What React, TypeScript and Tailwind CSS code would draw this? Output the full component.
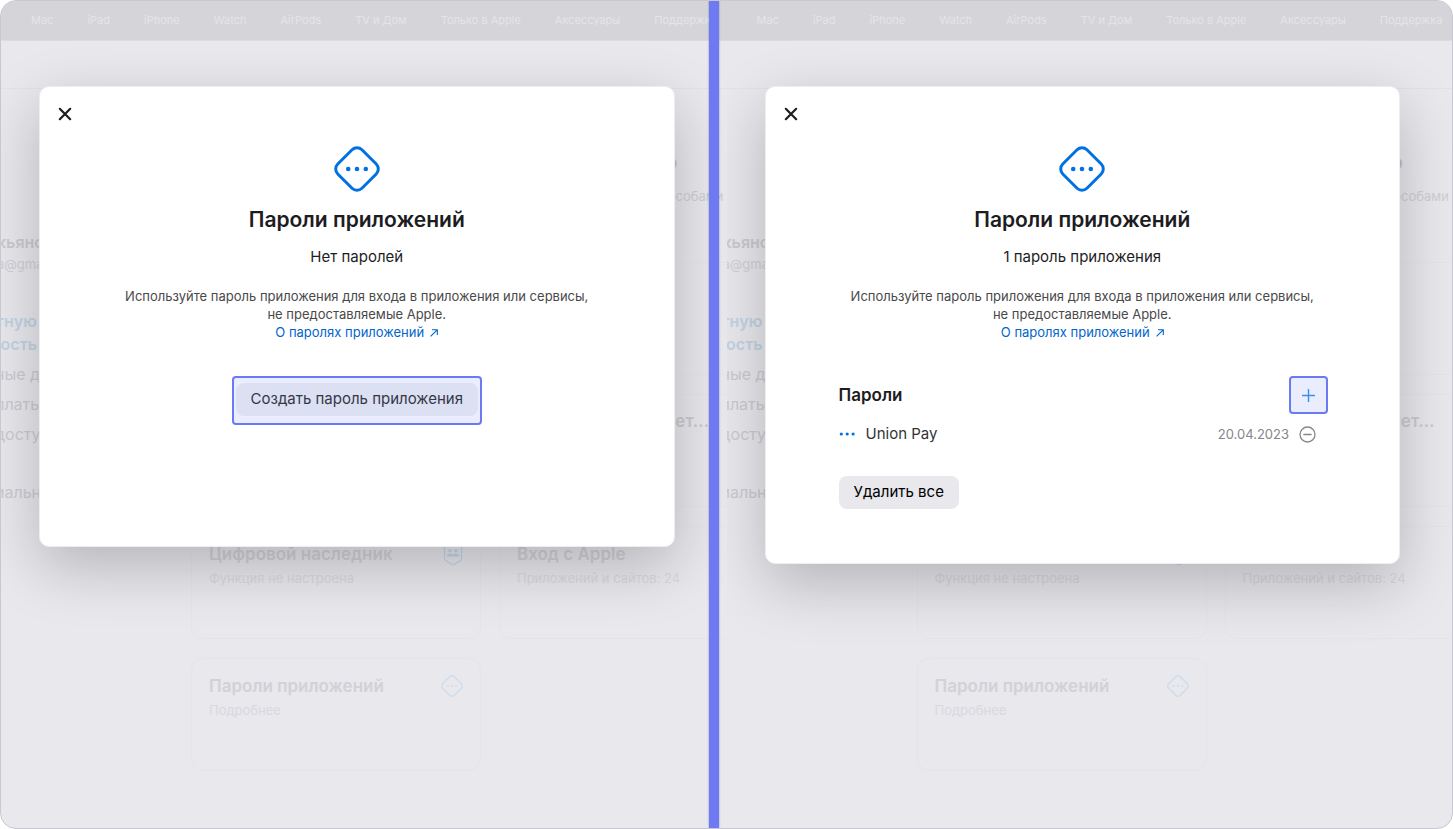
import React from 'react';

const navItems = ['Mac', 'iPad', 'iPhone', 'Watch', 'AirPods', 'TV и Дом', 'Только в Apple', 'Аксессуары', 'Поддержка'];

const DiamondIcon = ({ className }: { className: string }) => (
  <svg viewBox="0 0 46 46" fill="none" className={className} aria-hidden="true">
    <rect x="5.9" y="5.9" width="34.2" height="34.2" rx="7" transform="rotate(45 23 23)" stroke="currentColor" strokeWidth="3" />
    <circle cx="14.2" cy="23" r="2.3" fill="currentColor" />
    <circle cx="23" cy="23" r="2.3" fill="currentColor" />
    <circle cx="31.8" cy="23" r="2.3" fill="currentColor" />
  </svg>
);

const LegacyIcon = () => (
  <svg viewBox="0 0 20 26" fill="none" className="h-[26px] w-5 text-[#c3d6ea]" aria-hidden="true">
    <path d="M3.5 1.5h13a2 2 0 0 1 2 2v14.2a2 2 0 0 1-1 1.7L11 23.6a2 2 0 0 1-2 0l-6.5-4.2a2 2 0 0 1-1-1.7V3.5a2 2 0 0 1 2-2Z" stroke="currentColor" strokeWidth="1.2" />
    <circle cx="7" cy="9.8" r="1.8" fill="currentColor" />
    <circle cx="13" cy="9.8" r="1.8" fill="currentColor" />
    <path d="M3.8 15.500c0-2 1.400-3 3.200-3s2.600.8 3 1.600c.4-.8 1.200-1.600 3-1.600s3.200 1 3.200 3Z" fill="currentColor" />
  </svg>
);

const BackCard = ({ title, text, icon }: { title?: string; text?: string; icon?: React.ReactNode }) => (
  <div className="h-[113px] rounded-xl border border-[#e5e5e9] px-[17px] pt-[15px]">
    <div className="flex h-6 items-center justify-between">
      <h3 className="text-[17px] font-semibold leading-6 text-[#d2d2d6]">{title}</h3>
      {icon}
    </div>
    <p className="text-[13px] leading-6 text-[#d9d9dd]">{text}</p>
  </div>
);

const AccountPage = () => (
  <div className="col-start-1 row-start-1 min-w-0 overflow-hidden">
    <nav className="flex h-10 items-center gap-[34px] border-b border-[#dcdce0] bg-[#d5d5d9] pb-px pl-[30px]">
      {navItems.map((item) => (
        <a key={item} href="#" className="shrink-0 whitespace-nowrap text-[11px] leading-4 text-[#e4e4e8]">
          {item}
        </a>
      ))}
    </nav>
    <div className="h-12 border-b border-[#e2e2e6]" />
    <div className="flex">
      <aside className="w-[190px] shrink-0 overflow-hidden pt-[141px] text-[#cbcbcf]">
        <div className="-ml-1">
          <p className="text-base font-semibold leading-6">кьяно</p>
          <p className="text-[13px] leading-5 text-[#d0d0d4]">a@gma</p>
        </div>
        <a href="#" className="mt-9 flex w-9 flex-col items-end text-base font-semibold leading-[23px] text-[#c3d3e3]">
          <span>тную</span>
          <span>ность</span>
        </a>
        <ul className="-ml-1.5 mt-[3px] text-base leading-[30px]">
          <li>ные д</li>
          <li>платы</li>
          <li>досту</li>
          <li className="mt-7">иальн</li>
        </ul>
      </aside>
      <div className="min-w-0 grow">
        <div className="flex h-[173px] flex-col items-end pt-[57px]">
          <h1 className="pr-[49px] text-xl font-semibold leading-8 text-[#c3c3c7]">о</h1>
          <p className="pr-[3px] text-[13px] leading-9 text-[#cfcfd3]">особами</p>
        </div>
        <div className="grid grid-cols-[290px_290px] gap-x-[18px] gap-y-[19px]">
          <BackCard />
          <BackCard />
          <BackCard />
          <div className="h-[113px] rounded-xl border border-[#e5e5e9] pr-[79px] pt-[14px] text-right">
            <h3 className="text-[17px] font-semibold leading-6 text-[#cbcbcf]">нет…</h3>
          </div>
          <BackCard title="Цифровой наследник" text="Функция не настроена" icon={<LegacyIcon />} />
          <BackCard title="Вход с Apple" text="Приложений и сайтов: 24" />
          <BackCard
            title="Пароли приложений"
            text="Подробнее"
            icon={<DiamondIcon className="h-[22px] w-[22px] text-[#cfdded]" />}
          />
        </div>
      </div>
    </div>
  </div>
);

const Dialog = ({ status, children }: { status: string; children: React.ReactNode }) => (
  <section
    role="dialog"
    aria-label="Пароли приложений"
    className="z-10 col-start-1 row-start-1 mb-auto ml-[38px] mr-[52px] mt-[85px] rounded-[10px] border border-[#ededf0] bg-white shadow-[0_20px_60px_rgba(0,0,0,0.22)]"
  >
    <button type="button" aria-label="Закрыть" className="ml-[18px] mt-[20px] block text-[#1d1d1f]">
      <svg viewBox="0 0 14 14" className="h-[14px] w-[14px]" aria-hidden="true">
        <path d="M1.8 1.8 12.2 12.2M12.2 1.8 1.8 12.2" stroke="currentColor" strokeWidth="2.2" strokeLinecap="round" />
      </svg>
    </button>
    <div className="mt-[25px] flex flex-col items-center text-center">
      <DiamondIcon className="h-[46px] w-[46px] text-[#0071e3]" />
      <h2 className="mt-[14px] text-[21px] font-semibold leading-7 text-[#1d1d1f]">Пароли приложений</h2>
      <p className="mt-[11px] text-[15px] leading-6 text-[#1d1d1f]">{status}</p>
      <p className="mt-[18px] text-[13px] leading-[18px] text-[#494949]">
        Используйте пароль приложения для входа в приложения или сервисы,
        <br />
        не предоставляемые Apple.
      </p>
      <a href="#" className="flex items-center gap-[6px] text-[13px] leading-[18px] text-[#0066cc]">
        О паролях приложений
        <svg viewBox="0 0 8 8" fill="none" className="mt-[2px] h-2 w-2" aria-hidden="true">
          <path d="M.6 7.4 7.2.8M2 .7h5.3V6" stroke="currentColor" strokeWidth="1.1" />
        </svg>
      </a>
    </div>
    {children}
  </section>
);

const App = () => {
  return (
    <main className="grid min-h-screen grid-cols-2 overflow-hidden rounded-2xl border border-[#c9c8d1] bg-[#e8e8ed] font-['Inter','Liberation_Sans',sans-serif]">
      <div className="relative grid overflow-hidden">
        <AccountPage />
        <Dialog status="Нет паролей">
          <div className="mb-[121px] mt-[35px] flex justify-center">
            <div className="rounded-[4px] border-2 border-[#6b79f3] bg-[#e9edfd] px-[2px] pb-[7px] pt-[5px]">
              <button type="button" className="block h-[33px] rounded-lg bg-[#dce0f3] px-[15px] text-[15px] text-[#343846]">
                Создать пароль приложения
              </button>
            </div>
          </div>
        </Dialog>
        <div className="absolute inset-y-0 right-2 z-20 w-[10px] bg-[#6d7af4] shadow-[0_0_2px_rgba(0,0,0,0.35)]" />
      </div>

      <div className="grid overflow-hidden">
        <AccountPage />
        <Dialog status="1 пароль приложения">
          <div className="mb-[54px] mt-[35px] pl-[73px] pr-[71px]">
            <div className="flex items-center justify-between">
              <h3 className="text-[17px] font-semibold leading-6 text-[#1d1d1f]">Пароли</h3>
              <button
                type="button"
                aria-label="Создать пароль"
                className="flex h-[38px] w-[39px] items-center justify-center rounded-[4px] border-2 border-[#6b79f3] bg-[#e9edfd] text-[#3a8de8]"
              >
                <svg viewBox="0 0 13 13" className="h-[13px] w-[13px]" aria-hidden="true">
                  <path d="M6.5.5v12M.5 6.5h12" stroke="currentColor" strokeWidth="1.4" strokeLinecap="round" />
                </svg>
              </button>
            </div>
            <div className="mt-2 flex items-center pr-3">
              <svg viewBox="0 0 16 4" className="h-1 w-4 text-[#0071e3]" aria-hidden="true">
                <circle cx="2.3" cy="2" r="1.6" fill="currentColor" />
                <circle cx="8.2" cy="2" r="1.6" fill="currentColor" />
                <circle cx="14.1" cy="2" r="1.6" fill="currentColor" />
              </svg>
              <span className="ml-[11px] grow text-[15px] leading-6 text-[#333336]">Union Pay</span>
              <span className="text-[13px] leading-6 text-[#86868b]">20.04.2023</span>
              <button type="button" aria-label="Удалить Union Pay" className="ml-[10px] text-[#86868b]">
                <svg viewBox="0 0 17 17" fill="none" className="h-[17px] w-[17px]" aria-hidden="true">
                  <circle cx="8.5" cy="8.5" r="7.5" stroke="currentColor" strokeWidth="1.3" />
                  <path d="M5 8.5h7" stroke="currentColor" strokeWidth="1.5" strokeLinecap="round" />
                </svg>
              </button>
            </div>
            <button type="button" className="mt-[30px] block h-[33px] rounded-lg bg-[#e8e8ed] px-[15px] text-[15px] text-black">
              Удалить все
            </button>
          </div>
        </Dialog>
      </div>
    </main>
  );
};

export default App;
